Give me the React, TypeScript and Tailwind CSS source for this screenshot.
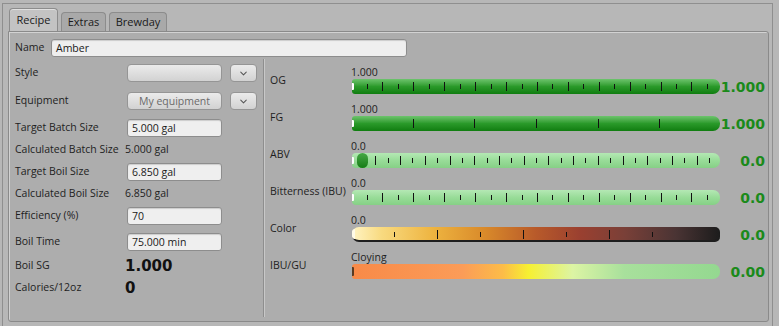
import { ChevronDown } from 'lucide-react';

const font = { fontFamily: '"Open Sans", "DejaVu Sans", sans-serif' };

type Tick = { x: number; long: boolean };

function alternating(start: number, step: number, count: number, firstLong = false): Tick[] {
  return Array.from({ length: count }, (_, i) => ({
    x: start + i * step,
    long: firstLong ? i % 2 === 0 : i % 2 === 1,
  }));
}

const ogTicks = alternating(15, 15.45, 23);
const fgTicks = [61, 122, 184, 246, 307].map((x) => ({ x, long: true }));
const abvTicks = alternating(11, 12.36, 29);
const colorTicks = alternating(42, 43, 7);

function Ticks({ ticks, color = '#111' }: { ticks: Tick[]; color?: string }) {
  return (
    <svg className="absolute inset-0" width={368} height={15}>
      {ticks.map((t, i) => (
        <line
          key={i}
          x1={Math.round(t.x) + 0.5}
          x2={Math.round(t.x) + 0.5}
          y1={t.long ? 3 : 5}
          y2={t.long ? 12 : 10}
          stroke={color}
          strokeWidth={1}
        />
      ))}
    </svg>
  );
}

function Gauge({
  label,
  small,
  value,
  bar,
}: {
  label: string;
  small: string;
  value: string;
  bar: React.ReactNode;
}) {
  return (
    <div className="flex items-center">
      <div className="w-[82px] text-[10.5px] text-[#1e1e1e] pt-[2px]">{label}</div>
      <div className="flex flex-col">
        <div className="h-[14px] text-[10.5px] leading-[14px] text-[#1e1e1e] -ml-[1px]">{small}</div>
        <div className="flex items-center h-[15px]">
          {bar}
          <div
            className="w-[45px] text-right text-[14px] font-bold text-[#1a8a1a] leading-none"
            style={{ fontFamily: '"DejaVu Sans", sans-serif' }}
          >
            {value}
          </div>
        </div>
      </div>
    </div>
  );
}

function Input({ value, w = 'w-[95px]' }: { value: string; w?: string }) {
  return (
    <div
      className={`${w} h-[18px] bg-[#efefef] border border-[#8d8d8d] rounded-[3px] px-[4px] text-[10.5px] leading-[16px] text-[#1a1a1a] shadow-[inset_0_1px_1px_rgba(0,0,0,0.15)]`}
    >
      {value}
    </div>
  );
}

function Combo({ text }: { text: string }) {
  return (
    <div className="flex items-center gap-[8px]">
      <div className="w-[95px] h-[18px] rounded-[4px] border border-[#959595] bg-gradient-to-b from-[#ebebeb] to-[#d2d2d2] text-[10.5px] leading-[16px] text-center text-[#6a6a6a]">
        {text}
      </div>
      <div className="w-[27px] h-[18px] rounded-[4px] border border-[#959595] bg-gradient-to-b from-[#ebebeb] to-[#d2d2d2] flex items-center justify-center">
        <ChevronDown size={11} strokeWidth={2.2} color="#555" />
      </div>
    </div>
  );
}

function Row({ h, label, children }: { h: string; label: string; children?: React.ReactNode }) {
  return (
    <div className={`flex items-center ${h}`}>
      <div className="w-[112px] text-[10.5px] text-[#1e1e1e] whitespace-nowrap">{label}</div>
      {children}
    </div>
  );
}

export default function App() {
  return (
    <div className="w-[779px] h-[326px] bg-[#b7b7b7] overflow-hidden" style={font}>
      <div className="ml-[2px] mt-[3px] w-[771px] h-[323px] border-t border-l border-r border-[#8f8f8f]">
        {/* tabs */}
        <div className="flex items-end pl-[6px] pt-[4px] h-[27px] gap-[3px]">
          <div className="h-[23px] w-[49px] rounded-t-[4px] border border-b-0 border-[#8c8c8c] bg-[#c3c3c3] text-[11px] text-[#1a1a1a] flex items-center justify-center shadow-[inset_0_1px_0_#e0e0e0]">
            Recipe
          </div>
          <div className="h-[19px] w-[45px] rounded-t-[4px] border border-b-0 border-[#8c8c8c] bg-[#a9a9a9] text-[11px] text-[#1a1a1a] flex items-center justify-center">
            Extras
          </div>
          <div className="h-[19px] w-[58px] rounded-t-[4px] border border-b-0 border-[#8c8c8c] bg-[#a9a9a9] text-[11px] text-[#1a1a1a] flex items-center justify-center">
            Brewday
          </div>
        </div>

        {/* pane */}
        <div className="ml-[5px] w-[761px] h-[291px] border border-[#8a8a8a] rounded-b-[3px] rounded-tr-[3px] bg-[#adadad] shadow-[inset_1px_1px_0_#d2d2d2]">
          <div className="flex items-center h-[25px] pt-[7px] pl-[6px]">
            <div className="w-[36px] text-[10.5px] text-[#1e1e1e]">Name</div>
            <Input value="Amber" w="w-[356px]" />
          </div>

          <div className="flex mt-[2px]">
            {/* left column */}
            <div className="w-[254px] pl-[6px]">
              <Row h="h-[28px]" label="Style">
                <Combo text="" />
              </Row>
              <Row h="h-[28px]" label="Equipment">
                <Combo text="My equipment" />
              </Row>
              <Row h="h-[26px]" label="Target Batch Size">
                <Input value="5.000 gal" />
              </Row>
              <Row h="h-[18px]" label="Calculated Batch Size">
                <span className="text-[10.5px] text-[#1e1e1e] -ml-[2px]">5.000 gal</span>
              </Row>
              <Row h="h-[26px]" label="Target Boil Size">
                <Input value="6.850 gal" />
              </Row>
              <Row h="h-[18px]" label="Calculated Boil Size">
                <span className="text-[10.5px] text-[#1e1e1e] -ml-[2px]">6.850 gal</span>
              </Row>
              <Row h="h-[26px]" label="Efficiency (%)">
                <Input value="70" />
              </Row>
              <Row h="h-[26px]" label="Boil Time">
                <Input value="75.000 min" />
              </Row>
              <Row h="h-[22px]" label="Boil SG">
                <span
                  className="text-[15px] font-bold text-[#111] -ml-[2px]"
                  style={{ fontFamily: '"DejaVu Sans", sans-serif' }}
                >
                  1.000
                </span>
              </Row>
              <Row h="h-[22px]" label="Calories/12oz">
                <span
                  className="text-[15px] font-bold text-[#111] -ml-[2px]"
                  style={{ fontFamily: '"DejaVu Sans", sans-serif' }}
                >
                  0
                </span>
              </Row>
            </div>

            {/* right column */}
            <div className="flex-1 h-[258px] border-l border-[#8e8e8e] shadow-[inset_1px_0_0_#c8c8c8] pl-[6px] pt-[6px] flex flex-col gap-[8px]">
              <Gauge
                label="OG"
                small="1.000"
                value="1.000"
                bar={
                  <div className="relative w-[368px] h-[15px] rounded-r-[7px] rounded-l-[3px] bg-gradient-to-b from-[#6cc46c] via-[#2a9a2a] to-[#0f7d0f]">
                    <div className="absolute left-0 top-[4px] w-[2px] h-[7px] bg-white rounded-r-[1px]" />
                    <Ticks ticks={ogTicks} />
                  </div>
                }
              />
              <Gauge
                label="FG"
                small="1.000"
                value="1.000"
                bar={
                  <div className="relative w-[368px] h-[15px] rounded-r-[7px] rounded-l-[3px] bg-gradient-to-b from-[#6cc46c] via-[#2a9a2a] to-[#0f7d0f]">
                    <div className="absolute left-0 top-[4px] w-[2px] h-[7px] bg-white rounded-r-[1px]" />
                    <Ticks ticks={fgTicks} />
                  </div>
                }
              />
              <Gauge
                label="ABV"
                small="0.0"
                value="0.0"
                bar={
                  <div className="relative w-[368px] h-[15px] rounded-r-[7px] rounded-l-[4px] bg-gradient-to-b from-[#b4e8b4] via-[#98dc98] to-[#86d086]">
                    <div className="absolute left-0 top-[4px] w-[2px] h-[7px] bg-white rounded-r-[1px]" />
                    <Ticks ticks={abvTicks} />
                    <div className="absolute left-[5px] top-0 w-[11px] h-[15px] rounded-full bg-gradient-to-b from-[#45a845] to-[#137d13]" />
                  </div>
                }
              />
              <Gauge
                label="Bitterness (IBU)"
                small="0.0"
                value="0.0"
                bar={
                  <div className="relative w-[368px] h-[15px] rounded-r-[7px] rounded-l-[4px] bg-gradient-to-b from-[#b4e8b4] via-[#98dc98] to-[#86d086]">
                    <div className="absolute left-0 top-[4px] w-[2px] h-[7px] bg-white rounded-r-[1px]" />
                    <Ticks ticks={ogTicks} />
                  </div>
                }
              />
              <Gauge
                label="Color"
                small="0.0"
                value="0.0"
                bar={
                  <div className="relative w-[368px] h-[15px] rounded-r-[5px] rounded-l-[7px] border-b-[2px] border-[#1e1e1e] bg-[linear-gradient(to_right,#fff4c4_0%,#f8da80_8%,#eeb440_22%,#d98a2a_36%,#b85a2a_50%,#9a4030_62%,#7a4038_74%,#4a3434_88%,#1c1c1c_100%)]">
                    <div className="absolute left-0 top-[2px] w-[3px] h-[10px] bg-[#fffbe8] rounded-l-full" />
                    <Ticks ticks={colorTicks} />
                  </div>
                }
              />
              <Gauge
                label="IBU/GU"
                small="Cloying"
                value="0.00"
                bar={
                  <div className="relative w-[368px] h-[15px] rounded-r-[7px] rounded-l-[3px] bg-[linear-gradient(to_right,#f88a48_0%,#fb9c58_30%,#fcbc48_41%,#f6f032_48%,#dcf4a4_60%,#a8e09c_74%,#94d890_100%)]">
                    <div className="absolute left-0 top-[3px] w-[2px] h-[9px] bg-[#5a3a20] rounded-r-[1px]" />
                  </div>
                }
              />
            </div>
          </div>
        </div>
      </div>
    </div>
  );
}
